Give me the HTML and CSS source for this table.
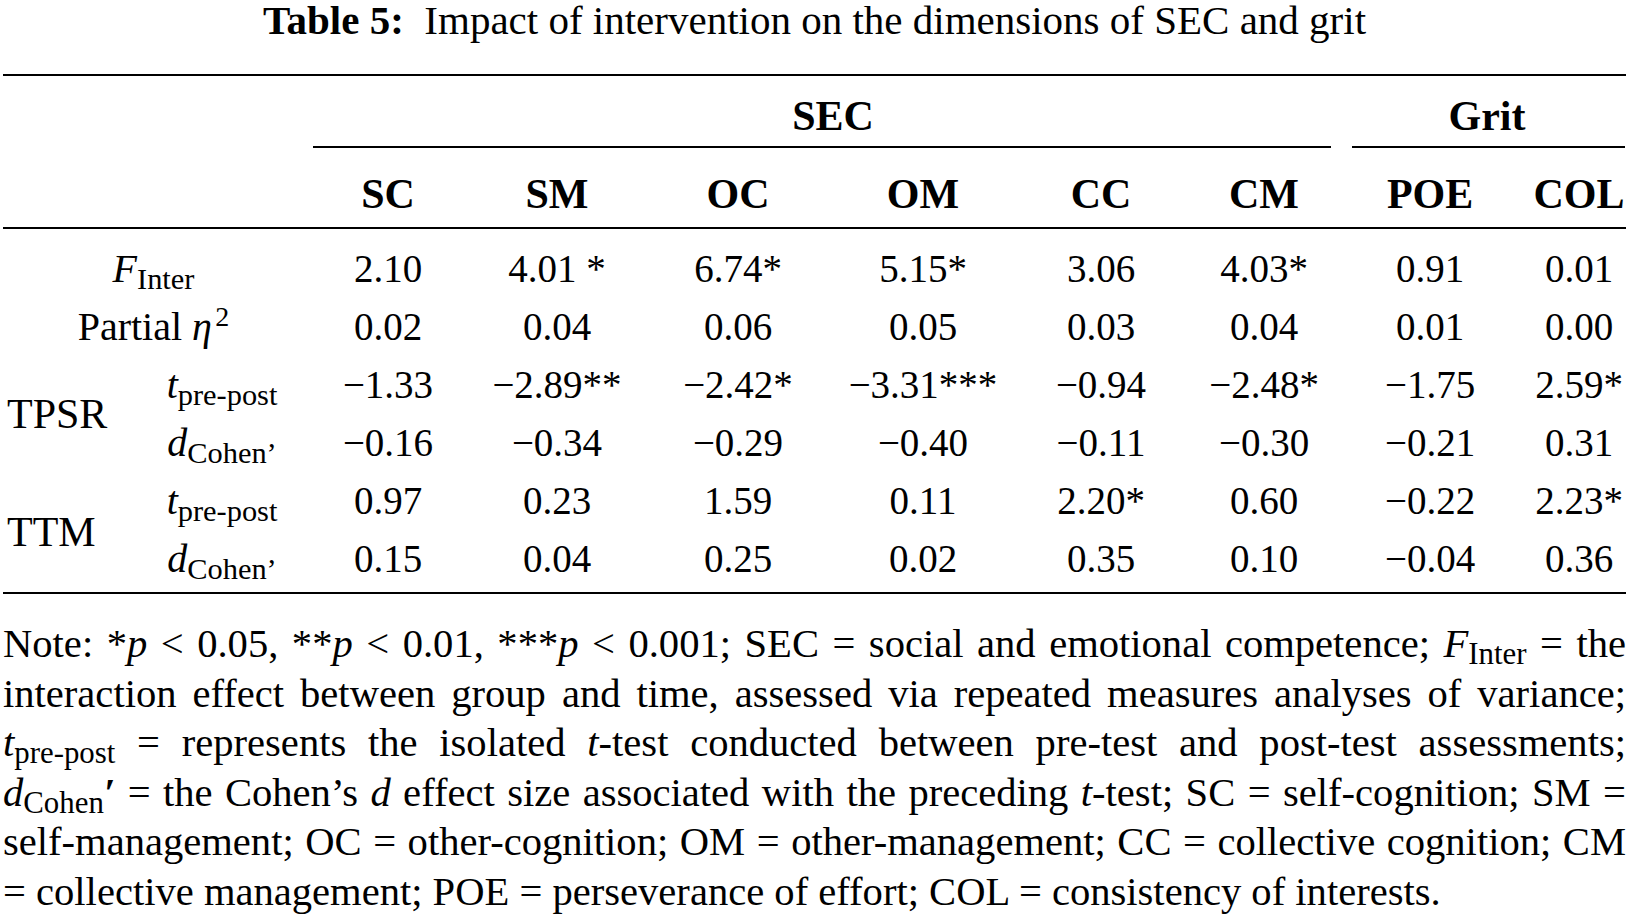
FILE: index.html
```html
<!DOCTYPE html>
<html lang="en">
<head>
<meta charset="utf-8">
<title>Table 5</title>
<link rel="stylesheet" href="styles.css">
</head>
<body>
<div class="page">
  <h1 class="caption"><b class="caption-label">Table 5:</b>Impact of intervention on the dimensions of SEC and grit</h1>
  <table class="results">
    <colgroup>
      <col class="c-group"><col class="c-stat">
      <col class="c-sc"><col class="c-sm"><col class="c-oc"><col class="c-om"><col class="c-cc"><col class="c-cm">
      <col class="c-poe"><col class="c-col">
    </colgroup>
    <thead>
      <tr class="group-row">
        <th colspan="2"></th>
        <th colspan="6" class="group sec">SEC</th>
        <th colspan="2" class="group grit">Grit</th>
      </tr>
      <tr class="col-row">
        <th colspan="2"></th>
        <th>SC</th><th>SM</th><th>OC</th><th>OM</th><th>CC</th><th>CM</th><th>POE</th><th>COL</th>
      </tr>
    </thead>
    <tbody>
      <tr>
        <td colspan="2" class="stat-label"><i>F</i><span class="sub">Inter</span></td>
        <td>2.10</td><td>4.01 *</td><td>6.74*</td><td>5.15*</td><td>3.06</td><td>4.03*</td><td>0.91</td><td>0.01</td>
      </tr>
      <tr>
        <td colspan="2" class="stat-label">Partial <i>η</i><span class="sup">2</span></td>
        <td>0.02</td><td>0.04</td><td>0.06</td><td>0.05</td><td>0.03</td><td>0.04</td><td>0.01</td><td>0.00</td>
      </tr>
      <tr>
        <td rowspan="2" class="group-label">TPSR</td>
        <td class="stat-label"><i>t</i><span class="sub">pre-post</span></td>
        <td>−1.33</td><td>−2.89**</td><td>−2.42*</td><td>−3.31***</td><td>−0.94</td><td>−2.48*</td><td>−1.75</td><td>2.59*</td>
      </tr>
      <tr>
        <td class="stat-label"><i>d</i><span class="sub">Cohen’</span></td>
        <td>−0.16</td><td>−0.34</td><td>−0.29</td><td>−0.40</td><td>−0.11</td><td>−0.30</td><td>−0.21</td><td>0.31</td>
      </tr>
      <tr>
        <td rowspan="2" class="group-label">TTM</td>
        <td class="stat-label"><i>t</i><span class="sub">pre-post</span></td>
        <td>0.97</td><td>0.23</td><td>1.59</td><td>0.11</td><td>2.20*</td><td>0.60</td><td>−0.22</td><td>2.23*</td>
      </tr>
      <tr>
        <td class="stat-label"><i>d</i><span class="sub">Cohen’</span></td>
        <td>0.15</td><td>0.04</td><td>0.25</td><td>0.02</td><td>0.35</td><td>0.10</td><td>−0.04</td><td>0.36</td>
      </tr>
    </tbody>
  </table>
  <p class="note">
    <span class="note-line">Note: *<i>p</i> &lt; 0.05, **<i>p</i> &lt; 0.01, ***<i>p</i> &lt; 0.001; SEC = social and emotional competence; <i>F</i><span class="sub">Inter</span> = the</span>
    <span class="note-line">interaction effect between group and time, assessed via repeated measures analyses of variance;</span>
    <span class="note-line"><i>t</i><span class="sub">pre-post</span> = represents the isolated <i>t</i>-test conducted between pre-test and post-test assessments;</span>
    <span class="note-line"><i>d</i><span class="sub">Cohen</span><i class="prime">′</i> = the Cohen’s <i>d</i> effect size associated with the preceding <i>t</i>-test; SC = self-cognition; SM =</span>
    <span class="note-line">self-management; OC = other-cognition; OM = other-management; CC = collective cognition; CM</span>
    <span class="note-line">= collective management; POE = perseverance of effort; COL = consistency of interests.</span>
  </p>
</div>
</body>
</html>
```

FILE: styles.css
```css
html, body {
  margin: 0;
  background: #ffffff;
}

body {
  font-family: "Liberation Serif", "Times New Roman", serif;
  color: #000000;
}

.page {
  padding: 0 3px;
}

.caption {
  margin: 0;
  font-size: 41px;
  line-height: 40px;
  font-weight: normal;
  text-align: center;
}

.caption-label {
  font-weight: bold;
  margin-right: 0.5em;
}

.results {
  margin-top: 34px;
  width: 1623px;
  table-layout: fixed;
  border-collapse: separate;
  border-spacing: 0;
  border-top: 2px solid #000;
  border-bottom: 2px solid #000;
  font-size: 40px;
}

.c-group { width: 137px; }
.c-stat { width: 164px; }
.c-sc { width: 168px; }
.c-sm { width: 170px; }
.c-oc { width: 192px; }
.c-om { width: 178px; }
.c-cc { width: 178px; }
.c-cm { width: 148px; }
.c-poe { width: 184px; }
.c-col { width: 104px; }

.results th,
.results td {
  padding: 0;
  text-align: center;
  white-space: nowrap;
}

.group-row th {
  font-size: 42px;
  line-height: 60px;
  padding-top: 10px;
  padding-bottom: 2px;
}

.group.sec {
  padding-left: 24px;
  background: linear-gradient(#000, #000) no-repeat left 9px bottom 0 / calc(100% - 16px) 2px;
}

.group.grit {
  padding-left: 10px;
  background: linear-gradient(#000, #000) no-repeat left 14px bottom 0 / calc(100% - 15px) 2px;
}

.col-row th {
  font-size: 42px;
  line-height: 66px;
  padding-top: 13px;
  border-bottom: 2px solid #000;
}

.col-row th:last-child,
.results tbody td:last-child {
  padding-left: 10px;
}

.results tbody td {
  font-size: 39px;
  line-height: 58px;
}

.results tbody td.stat-label {
  font-size: 40px;
}

.results tbody tr:first-child td {
  padding-top: 11px;
}

.results tbody tr:last-child td {
  padding-bottom: 4px;
}

.results tbody td.group-label {
  font-size: 42px;
  text-align: left;
  padding-left: 4px;
  vertical-align: middle;
}

.sub {
  font-size: 0.76em;
  vertical-align: -0.24em;
  line-height: 0;
  font-style: normal;
}

.sup {
  font-size: 0.7em;
  vertical-align: 0.5em;
  line-height: 0;
  margin-left: 0.12em;
}

.note {
  margin: 25px 0 0;
  font-size: 40.6px;
  line-height: 49.5px;
}

.note-line {
  display: block;
  text-align: justify;
  text-align-last: justify;
}

.note-line:last-child {
  text-align-last: left;
}

.prime {
  font-weight: bold;
}
```
